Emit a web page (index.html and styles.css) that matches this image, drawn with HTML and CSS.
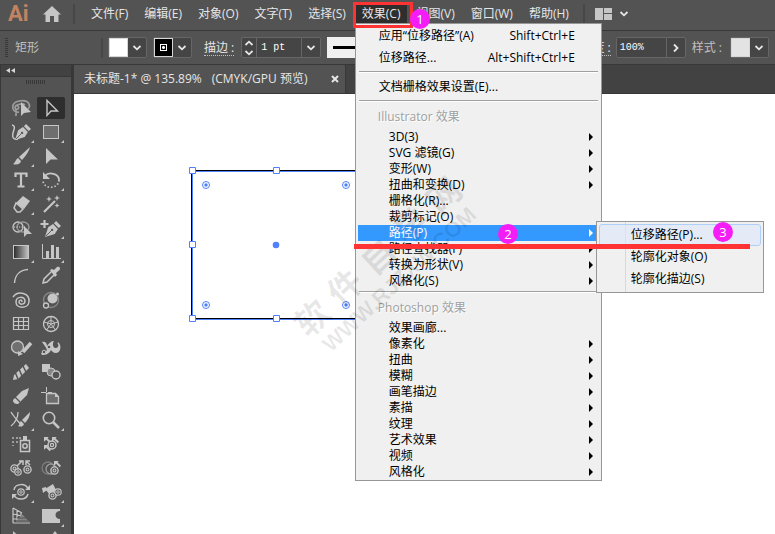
FILE: index.html
```html
<!DOCTYPE html>
<html lang="zh-CN">
<head>
    <meta charset="UTF-8">
    <meta name="viewport" content="width=device-width, initial-scale=1.0">
    <title>未标题-1</title>
    <link rel="stylesheet" href="styles.css">
</head>
<body>

<svg class="symbols" aria-hidden="true">
    <symbol id="chevron" viewBox="0 0 10 6"><path d="M1.5 1 5 4.3 8.5 1" fill="none" stroke="#e6e6e6" stroke-width="1.8"/></symbol>
    <symbol id="ring" viewBox="0 0 10 10"><circle cx="5" cy="5" r="4" fill="#535353" stroke="#c6c6c6" stroke-width="1.5"/><circle cx="5" cy="5" r="1.6" fill="none" stroke="#c6c6c6" stroke-width="1.2"/></symbol>
    <symbol id="nib" viewBox="0 0 18 18"><path d="M0 18 3.5 7 9 3.500l5.500 5.500L11 14.500Z" fill="#c6c6c6"/><path d="M10 2.600 12.500 0 18 5.500 15.400 8Z" fill="#c6c6c6"/><path d="m1 17 6.500-6.500" stroke="#535353"/><circle cx="8" cy="10" r="1.300" fill="#535353"/></symbol>
    <!-- arrow pointing to the upper left -->
    <symbol id="arrow" viewBox="0 0 8 8"><path d="M0 0h5.500L4 1.500 8 5.500 6.500 7 2.500 3 0 5.500Z" fill="#c6c6c6"/></symbol>
</svg>

<div class="app">

    <!-- Menu bar -->
    <div class="menubar">
        <span class="logo">Ai</span>
        <button class="home" aria-label="主页">
            <svg width="18" height="16" viewBox="0 0 18 16"><path d="M9 0 18 8.500H15.500V16H11V10H7V16H2.500V8.500H0Z" fill="#c6c6c6"/></svg>
        </button>
        <div class="divider"></div>
        <nav class="menus">
            <button>文件(F)</button>
            <button>编辑(E)</button>
            <button>对象(O)</button>
            <button>文字(T)</button>
            <button>选择(S)</button>
            <div class="menu-open">
                <button class="current">效果(C)</button>
                <div class="dropdown">
                    <ul class="large">
                        <li><button>应用“位移路径”(A)<kbd>Shift+Ctrl+E</kbd></button></li>
                        <li><button>位移路径...<kbd>Alt+Shift+Ctrl+E</kbd></button></li>
                    </ul>
                    <hr>
                    <ul class="large">
                        <li><button>文档栅格效果设置(E)...</button></li>
                    </ul>
                    <hr>
                    <h3>Illustrator 效果</h3>
                    <ul>
                        <li class="sub"><button>3D(3)</button></li>
                        <li class="sub"><button>SVG 滤镜(G)</button></li>
                        <li class="sub"><button>变形(W)</button></li>
                        <li class="sub"><button>扭曲和变换(D)</button></li>
                        <li><button>栅格化(R)...</button></li>
                        <li><button>裁剪标记(O)</button></li>
                        <li class="sub active"><button>路径(P)</button>
                            <div class="submenu">
                                <button class="hot">位移路径(P)...</button>
                                <button>轮廓化对象(O)</button>
                                <button>轮廓化描边(S)</button>
                            </div>
                        </li>
                        <li class="sub"><button>路径查找器(F)</button></li>
                        <li class="sub"><button>转换为形状(V)</button></li>
                        <li class="sub"><button>风格化(S)</button></li>
                    </ul>
                    <hr>
                    <h3>Photoshop 效果</h3>
                    <ul>
                        <li><button>效果画廊...</button></li>
                        <li class="sub"><button>像素化</button></li>
                        <li class="sub"><button>扭曲</button></li>
                        <li class="sub"><button>模糊</button></li>
                        <li class="sub"><button>画笔描边</button></li>
                        <li class="sub"><button>素描</button></li>
                        <li class="sub"><button>纹理</button></li>
                        <li class="sub"><button>艺术效果</button></li>
                        <li class="sub"><button>视频</button></li>
                        <li class="sub"><button>风格化</button></li>
                    </ul>
                </div>
            </div>
            <button>视图(V)</button>
            <button>窗口(W)</button>
            <button>帮助(H)</button>
        </nav>
        <div class="divider"></div>
        <button class="workspace" aria-label="工作区">
            <svg width="17" height="12" viewBox="0 0 17 12"><path d="M0 0h8v12H0zM9 0h8v5H9zM9 6h8v6H9z" fill="#c6c6c6"/></svg>
            <svg width="10" height="6"><use href="#chevron"/></svg>
        </button>
    </div>

    <!-- Control bar -->
    <div class="controlbar">
        <div class="grip"></div>
        <span class="kind">矩形</span>
        <div class="divider"></div>
        <div class="field fill">
            <span class="swatch white"></span>
            <button aria-label="填色"><svg width="10" height="6"><use href="#chevron"/></svg></button>
        </div>
        <div class="field">
            <span class="swatch black"><i></i></span>
            <button aria-label="描边颜色"><svg width="10" height="6"><use href="#chevron"/></svg></button>
        </div>
        <label class="dotted stroke-label" for="stroke">描边 :</label>
        <div class="field stroke">
            <button class="spin" aria-label="微调">
                <svg width="10" height="16" viewBox="0 0 10 16"><path d="M1.500 5 5 1.700 8.500 5M1.500 11 5 14.300 8.500 11" fill="none" stroke="#e6e6e6" stroke-width="1.800"/></svg>
            </button>
            <input id="stroke" type="text" value="1 pt">
            <button aria-label="粗细"><svg width="10" height="6"><use href="#chevron"/></svg></button>
        </div>
        <button class="profile" aria-label="画笔"><span></span></button>
        <label class="dotted" for="opacity">不透明度 :</label>
        <div class="field opacity">
            <input id="opacity" type="text" value="100%">
            <button aria-label="更多"><svg width="6" height="10" viewBox="0 0 6 10"><path d="M1 1.500 4.500 5 1 8.500" fill="none" stroke="#e6e6e6" stroke-width="1.800"/></svg></button>
        </div>
        <span class="style-label">样式 :</span>
        <div class="field">
            <span class="swatch grey"></span>
            <button aria-label="图形样式"><svg width="10" height="6"><use href="#chevron"/></svg></button>
        </div>
    </div>

    <div class="workarea">
        <!-- Tools -->
        <aside class="toolbox">
            <div class="collapse"><svg width="9" height="5" viewBox="0 0 9 5"><path d="M4 0v5L0 2.500ZM9 0v5L5 2.500Z" fill="#d6d6d6"/></svg></div>
            <div class="handle"></div>
            <div class="tools">
                <button aria-label="套索"><svg viewBox="0 0 28 22"><path d="M12 15C7 16 5 12 6 8c2-5 14-6 16-1 1 2 0 4-1 5M8 11c0-4 8-5 10-3M8 11c2 3 5 0 3-2s-4 1-2 4v6" fill="none" stroke="#9d9d9d" stroke-width="1.700"/><path d="M14 5v14l3-3 7-1Z" fill="#c6c6c6"/></svg></button>
                <button class="selected" aria-label="选择"><svg viewBox="0 0 28 22"><path d="M10 3.500v15l4-4.500h6.500Z" fill="none" stroke="#c6c6c6" stroke-width="1.400"/></svg></button>

                <button class="more" aria-label="曲率"><svg viewBox="0 0 28 22"><path d="M5 4c4 1 2 4 1 8s0 7 5 6" fill="none" stroke="#c6c6c6" stroke-width="1.500"/><use href="#nib" x="8" y="3" width="16" height="16"/></svg></button>
                <button class="more" aria-label="矩形"><svg viewBox="0 0 28 22"><rect x="6.500" y="4.500" width="15" height="13" fill="#6e6e6e" stroke="#c6c6c6"/></svg></button>

                <button class="more" aria-label="画笔"><svg viewBox="0 0 28 22"><path d="M23 2 12 12l3 3c4-4 7-9 8-13ZM11 13l3 3c-1 4-5 4-8 3 3-2 2-4 5-6Z" fill="#c6c6c6"/></svg></button>
                <button aria-label="直接选择"><svg viewBox="0 0 28 22"><path d="M9 3v16l4.500-4.500H21Z" fill="#c6c6c6"/></svg></button>

                <button class="more" aria-label="文字"><svg viewBox="0 0 28 22"><path d="M8.500 8V4.500h11V8M14 4.500v13M10.500 17.500h7" fill="none" stroke="#c6c6c6" stroke-width="2.200"/></svg></button>
                <button class="more" aria-label="旋转"><svg viewBox="0 0 28 22"><path d="M8 7c4-5 14-2 14 4" fill="none" stroke="#c6c6c6" stroke-width="1.800"/><path d="M6 3v7h7Z" fill="#c6c6c6"/><path d="M22 11c0 9-15 10-16 1" fill="none" stroke="#c6c6c6" stroke-width="1.700" stroke-dasharray="1.500 2"/></svg></button>

                <button class="more" aria-label="橡皮擦"><svg viewBox="0 0 28 22"><path d="m9 10 7-7 7 5-6 8Z" fill="#c6c6c6"/><path d="m9 10 7 6-3 3h-3l-3-4Z" fill="none" stroke="#c6c6c6" stroke-width="1.500"/></svg></button>
                <button aria-label="魔棒"><svg viewBox="0 0 28 22"><path d="M7 19 18 8" stroke="#c6c6c6" stroke-width="2.200"/><path d="m12 3 .8 2.200L15 6l-2.200.800L12 9l-.800-2.200L9 6l2.200-.800ZM20 2l.800 2.200L23 5l-2.200.800L20 8l-.800-2.200L17 5l2.200-.800ZM20 10l.700 1.800 1.800.700-1.800.700L20 15l-.700-1.800-1.800-.700 1.800-.700Z" fill="#c6c6c6"/></svg></button>

                <button aria-label="形状生成器"><svg viewBox="0 0 28 22"><circle cx="11" cy="10" r="5" fill="none" stroke="#c6c6c6" stroke-width="1.300"/><ellipse cx="16" cy="10" rx="6" ry="5" fill="none" stroke="#9d9d9d" stroke-width="1.300"/><path d="M7 10h12" stroke="#e0e0e0" stroke-dasharray="1 1.500"/><path d="M17 9v11l3-3h5Z" fill="#c6c6c6"/></svg></button>
                <button class="more" aria-label="添加锚点"><svg viewBox="0 0 28 22"><path d="M3.500 7h8M7.500 3v8" stroke="#c6c6c6" stroke-width="2.200"/><use href="#nib" x="8" y="4" width="16" height="16"/></svg></button>

                <button class="more" aria-label="渐变"><svg viewBox="0 0 28 22"><defs><linearGradient id="grad"><stop stop-color="#2a2a2a"/><stop offset="1" stop-color="#c6c6c6"/></linearGradient></defs><rect x="6.500" y="4.500" width="15" height="13" fill="url(#grad)" stroke="#c6c6c6"/></svg></button>
                <button class="more" aria-label="图表"><svg viewBox="0 0 28 22"><path d="M5.500 3v14.500H24" fill="none" stroke="#c6c6c6"/><path d="M9 10h3v7H9zM14 4h3v13h-3zM19 6h3v11h-3z" fill="#c6c6c6"/></svg></button>

                <button aria-label="弧形"><svg viewBox="0 0 28 22"><path d="M7.500 18C8 10 13 5 21 4.500" fill="none" stroke="#c6c6c6" stroke-width="1.400"/></svg></button>
                <button aria-label="吸管"><svg viewBox="0 0 28 22"><path d="m6 18 1-4 8-8 3 3-8 8Z" fill="none" stroke="#c6c6c6" stroke-width="1.500"/><path d="m13 5 2-1 2 1 3-3c2-1 4 1 2.500 3L19 8l1 2-2 2Z" fill="#c6c6c6"/></svg></button>

                <button aria-label="螺旋线"><svg viewBox="0 0 28 22"><path d="M6 8c5-7 17-4 16 5-1 7-13 7-13 0 0-6 9-6 9-1 0 4-6 4-6 1 0-2 3-3 3 0" fill="none" stroke="#c6c6c6" stroke-width="1.500"/></svg></button>
                <button aria-label="旋转扭曲"><svg viewBox="0 0 28 22"><circle cx="14" cy="11" r="7.500" fill="none" stroke="#858585" stroke-width="1.400"/><circle cx="15.500" cy="9.500" r="5" fill="#c6c6c6"/><circle cx="20.500" cy="5" r="1.500" fill="#c6c6c6"/><circle cx="9" cy="16.500" r="2.500" fill="#535353" stroke="#c6c6c6" stroke-width="1.300"/></svg></button>

                <button aria-label="矩形网格"><svg viewBox="0 0 28 22"><path d="M6.500 4.500h15v12h-15zM6.500 8.500h15M6.500 12.500h15M11.500 4.500v12M16.500 4.500v12" fill="none" stroke="#c6c6c6" stroke-width="1.200"/></svg></button>
                <button aria-label="极坐标网格"><svg viewBox="0 0 28 22"><circle cx="14" cy="11" r="7.500" fill="none" stroke="#c6c6c6" stroke-width="1.300"/><circle cx="14" cy="11" r="3.500" fill="none" stroke="#c6c6c6"/><path d="M14 3.500V11M7 9l7 2 7-2M9.500 17l4.500-6 4.500 6" fill="none" stroke="#c6c6c6"/></svg></button>

                <button aria-label="斑点画笔"><svg viewBox="0 0 28 22"><circle cx="10.500" cy="10" r="6" fill="#707070" stroke="#c6c6c6" stroke-width="1.300"/><path d="m24 6-8 9" stroke="#c6c6c6" stroke-width="3.500"/><path d="m11 14 5 3-5 2Z" fill="#c6c6c6"/></svg></button>
                <button aria-label="操控变形"><svg viewBox="0 0 28 22"><path d="M5 5c3-1 5 1 5 4 2-3 4-5 7-5-2 3-1 6 1 7 3 0 4-2 3-4-1-1 0-2 1-1 3 4 1 10-3 10-3 0-4-2-5-3-2 4-5 5-9 5l-1-2c2 0 5-1 6-3-1-3-3-5-5-8Z" fill="#c6c6c6"/><circle cx="7" cy="15" r="1.800" fill="#535353" stroke="#c6c6c6"/><circle cx="12" cy="10" r="1.300" fill="#535353"/></svg></button>

                <button aria-label="铅笔"><svg viewBox="0 0 28 22"><path d="m6 19 1-5L19 3l3 4-11 11Z" fill="#c6c6c6"/><path d="m8 11 3 7M12 8l3 7M16 5l3 6" stroke="#535353" stroke-width="1.500"/></svg></button>
                <button aria-label="混合"><svg viewBox="0 0 28 22"><path d="M5 3h8v8H5z" fill="#c6c6c6"/><circle cx="14" cy="11" r="4" fill="#858585" stroke="#c6c6c6"/><circle cx="19" cy="14" r="4" fill="#535353" stroke="#c6c6c6" stroke-width="1.400"/></svg></button>

                <button aria-label="蜡笔"><svg viewBox="0 0 28 22"><path d="m6 15 9-9 7-3-2 7-9 9c-3 0-5-1-5-4Z" fill="#c6c6c6"/><path d="m8 12 5 5" stroke="#535353" stroke-width="1.200"/></svg></button>
                <button aria-label="画板"><svg viewBox="0 0 28 22"><path d="M9.500 8.500h9l3 3v7h-12Z" fill="#6e6e6e" stroke="#c6c6c6" stroke-width="1.300"/><path d="M4 7.500h5M9.500 2v5M11 7.500h4" stroke="#c6c6c6"/><path d="M18 8v4h4Z" fill="#c6c6c6"/></svg></button>

                <button class="more" aria-label="实时上色"><svg viewBox="0 0 28 22"><path d="M4 3c3 5 7 9 11 14M11 3c0 6-2 10-7 14" fill="none" stroke="#c6c6c6" stroke-width="1.300"/><path d="m23 3-8 8 3 3c3-3 5-7 5-11ZM14 12l3 3c-1 3-4 3-6 2 2-1 1-4 3-5Z" fill="#c6c6c6"/></svg></button>
                <button class="more" aria-label="缩放"><svg viewBox="0 0 28 22"><circle cx="12" cy="9" r="5.700" fill="none" stroke="#c6c6c6" stroke-width="1.600"/><path d="m16 13 6 6" stroke="#c6c6c6" stroke-width="2.500"/></svg></button>

                <button aria-label="符号喷枪"><svg viewBox="0 0 28 22"><path d="M5 4h2v2H5zM9 4h2v2H9zM12 4h2v2h-2zM5 8h2v2H5zM9 8h2v2H9zM5 12h2v1H5z" fill="#9d9d9d"/><path d="M16 3h4v4h-4z" fill="#c6c6c6"/><rect x="13.500" y="7.500" width="9" height="11" fill="none" stroke="#c6c6c6" stroke-width="1.500"/><circle cx="18" cy="13" r="2.200" fill="none" stroke="#c6c6c6" stroke-width="1.500"/></svg></button>
                <button aria-label="符号移位"><svg viewBox="0 0 28 22"><use href="#arrow" x="7" y="4" width="7" height="7"/><use href="#arrow" x="15" y="4" width="7" height="7"/><use href="#arrow" x="7" y="12" width="7" height="7"/><use href="#ring" x="10" y="7" width="10" height="10"/></svg></button>

                <button aria-label="符号紧缩"><svg viewBox="0 0 28 22"><path d="M12 4h4v4M10 9l5-5M23 8l-4-4M19 8V4h4" fill="none" stroke="#c6c6c6" stroke-width="1.500"/><use href="#ring" x="3" y="7" width="9" height="9"/><use href="#ring" x="7" y="11" width="8" height="8"/><use href="#ring" x="16" y="8" width="9" height="9"/></svg></button>
                <button aria-label="符号缩放"><svg viewBox="0 0 28 22"><circle cx="11" cy="11" r="6" fill="none" stroke="#7c7c7c" stroke-width="1.300"/><circle cx="14" cy="12" r="5" fill="none" stroke="#9a9a9a" stroke-width="1.300"/><use href="#arrow" x="17" y="4" width="7" height="7"/><use href="#ring" x="13" y="9" width="9" height="9"/></svg></button>

                <button class="more" aria-label="符号旋转"><svg viewBox="0 0 28 22"><path d="M7 9c1-7 12-7 14-1M21 13c-2 7-12 6-14 1" fill="none" stroke="#c6c6c6" stroke-width="1.500"/><use href="#ring" x="10" y="7" width="8" height="8"/><path d="M18 9h5V4ZM10 13H5v5Z" fill="#c6c6c6"/></svg></button>
                <button class="more" aria-label="符号着色"><svg viewBox="0 0 28 22"><path d="m8 8 8-5 3 6-6 5Z" fill="#c6c6c6"/><path d="m9 6-4 1 1 5 4-3" fill="#c6c6c6"/><use href="#ring" x="11" y="10" width="9" height="9"/><use href="#ring" x="17" y="7" width="8" height="8"/></svg></button>

                <button aria-label="透视网格"><svg viewBox="0 0 28 22"><path d="M6 3v15M10 5v12M14 7v8M6 3l9 5M6 9l9 2M6 14l9 0M6 18h17" fill="none" stroke="#c6c6c6" stroke-width="1.200"/><path d="M14 10h2l7 8H8Z" fill="#858585"/><path d="M10 13h9M9 16h12" stroke="#535353"/></svg></button>
                <button class="more" aria-label="变形"><svg viewBox="0 0 28 22"><path d="M5 4h18v2c-6 0-6 8 0 8v4H5Z" fill="#c6c6c6"/></svg></button>

                <button aria-label="钢笔"><svg viewBox="0 0 28 22"><path d="M6 2v14l9-6Z" fill="#c6c6c6"/></svg></button>
                <button aria-label="抓手"><svg viewBox="0 0 28 22"><path d="m18 2 3 4h-6Z" fill="#c6c6c6"/></svg></button>
            </div>
        </aside>

        <!-- Document -->
        <main class="document">
            <div class="tabs">
                <div class="tab">
                    <span>未标题-1* @ 135.89%</span>
                    <span>(CMYK/GPU 预览)</span>
                    <button aria-label="关闭"><svg width="8" height="8" viewBox="0 0 8 8"><path d="m1 1 6 6M7 1 1 7" stroke="#e6e6e6" stroke-width="2"/></svg></button>
                </div>
            </div>
            <div class="canvas">
                <svg class="shape" width="178" height="158" viewBox="0 0 178 158">
                    <rect x="4" y="5" width="169" height="148" fill="#fff" stroke="#000" stroke-width="2"/>
                    <rect x="4.500" y="5.500" width="168" height="148" fill="none" stroke="#4f80ff"/>
                    <g fill="#fff" stroke="#4f80ff">
                        <path d="M1.500 1.500h6v6h-6zM85.500 1.500h6v6h-6zM169.500 1.500h6v6h-6zM1.500 75.500h6v6h-6zM169.500 75.500h6v6h-6zM1.500 149.500h6v6h-6zM85.500 149.500h6v6h-6zM169.500 149.500h6v6h-6z"/>
                        <circle cx="18" cy="19" r="3.500"/><circle cx="158" cy="19" r="3.500"/>
                        <circle cx="18" cy="139" r="3.500"/><circle cx="158" cy="139" r="3.500"/>
                    </g>
                    <g fill="#4f80ff">
                        <circle cx="18" cy="19" r="1.700"/><circle cx="158" cy="19" r="1.700"/>
                        <circle cx="18" cy="139" r="1.700"/><circle cx="158" cy="139" r="1.700"/>
                        <circle cx="88" cy="79" r="3.300"/>
                    </g>
                </svg>
            </div>
        </main>
    </div>

    <!-- Watermark and step marks -->
    <div class="watermark">
        <div class="name"><span>软</span><span>件</span><span>自</span><span>学</span><span>网</span></div>
        <div class="site">WWW.RJZXW.COM</div>
    </div>
    <div class="mark-box"></div>
    <div class="mark-line"></div>
    <span class="step one">1</span>
    <span class="step two">2</span>
    <span class="step three">3</span>
</div>

</body>
</html>
```

FILE: styles.css
```css
* {
    margin: 0;
    padding: 0;
    box-sizing: border-box;
}

body {
    font-family: "Open Sans", "Noto Sans CJK SC", sans-serif;
    font-size: 12px;
    line-height: 16px;
    background: #fff;
    color: #e6e6e6;
    overflow: hidden;
}

button {
    font: inherit;
    color: inherit;
    background: none;
    border: none;
}

svg {
    display: block;
    flex: none;
}

.symbols {
    position: absolute;
    width: 0;
    height: 0;
}

.app {
    position: relative;
    display: flex;
    flex-direction: column;
    height: 100vh;
    overflow: hidden;
}

/* Menu bar */
.menubar {
    display: flex;
    align-items: center;
    height: 31px;
    padding: 0 8px 3px;
    background: #535353;
    border-bottom: 1px solid #383838;
    flex: none;
}

.logo {
    width: 35px;
    font-family: "Liberation Sans Narrow", Roboto, sans-serif;
    font-size: 22px;
    font-weight: bold;
    line-height: 24px;
    color: #c08462;
}

.divider {
    width: 2px;
    height: 20px;
    background: #474747;
    flex: none;
}

.home {
    margin-right: 12px;
}

.menus {
    display: flex;
    gap: 2px;
    margin: 0 7px 0 9px;
    white-space: nowrap;
}

.menus > button,
.menus .current {
    height: 18px;
    line-height: 18px;
    padding: 0 7px;
}

.menus .current {
    background: #2e2e2e;
}

.menu-open {
    position: relative;
}

.workspace {
    display: flex;
    align-items: center;
    gap: 7px;
    margin-left: 10px;
}

/* Drop-down */
.dropdown {
    position: absolute;
    top: 18px;
    left: 0;
    z-index: 10;
    width: 247px;
    padding: 1px 0 0;
    background: #f0f0f0;
    border: 1px solid #979797;
    color: #000;
}

.dropdown ul {
    list-style: none;
}

.dropdown li {
    position: relative;
    height: 16px;
    padding: 0 2px;
}

.dropdown li > button {
    display: flex;
    align-items: center;
    width: 100%;
    height: 16px;
    padding-left: 31px;
    text-align: left;
    line-height: 16px;
}

.dropdown .large li,
.dropdown .large li > button {
    height: 22px;
}

.dropdown .large li > button {
    justify-content: space-between;
    padding: 0 24px 0 21px;
}

.dropdown kbd {
    font: inherit;
}

.dropdown h3 {
    height: 24px;
    padding-left: 22px;
    font-size: 12px;
    font-weight: normal;
    line-height: 24px;
    color: #a0a0a0;
    text-shadow: 1px 1px #fff;
}

.dropdown hr {
    height: 2px;
    margin: 2px 3px 3px;
    border: none;
    border-top: 1px solid #a0a0a0;
    background: #fff;
}

.dropdown .sub::after {
    content: "";
    position: absolute;
    top: 4px;
    right: 8px;
    border: 4px solid transparent;
    border-left-color: #000;
    border-right: none;
}

.dropdown .active > button {
    background: #3399ff;
    color: #fff;
}

.dropdown .active::after {
    border-left-color: #fff;
}

.submenu {
    position: absolute;
    top: -4px;
    left: 240px;
    z-index: 1;
    width: 168px;
    padding: 2px;
    background: linear-gradient(to right, transparent 28px, #d8d8d8 28px, #d8d8d8 29px, transparent 29px) #f0f0f0;
    border: 1px solid #979797;
}

.submenu button {
    display: block;
    width: 100%;
    height: 22px;
    padding-left: 31px;
    border: 1px solid transparent;
    text-align: left;
    line-height: 20px;
}

.submenu .hot {
    background: rgba(220, 232, 250, 0.6);
    border-color: #aecff7;
    border-radius: 3px;
}

/* Control bar */
.controlbar {
    display: flex;
    align-items: center;
    height: 34px;
    padding-left: 5px;
    background: #535353;
    border-bottom: 1px solid #383838;
    flex: none;
    white-space: nowrap;
}

.grip {
    width: 3px;
    height: 19px;
    margin-right: 7px;
    background: repeating-linear-gradient(#383838 0 1px, transparent 1px 2px);
}

.kind {
    flex: none;
    width: 86px;
    color: #c0c0c0;
}

.field {
    display: flex;
    flex: none;
    height: 21px;
    margin-right: 6px;
    background: #454545;
    border: 1px solid #666;
    border-radius: 2px;
}

.fill {
    margin-left: 5px;
}

.field button {
    display: flex;
    align-items: center;
    justify-content: center;
    width: 18px;
}

.swatch {
    width: 19px;
    height: 19px;
    border: 1px solid #d6d6d6;
}

.white {
    background: #fff;
}

.black {
    padding: 5px;
    background: #000;
}

.black i {
    display: block;
    width: 7px;
    height: 7px;
    border: 1px solid #fff;
    background: radial-gradient(#fff 1px, #000 2px);
}

.grey {
    background: #e3e3e3;
}

.field input {
    width: 46px;
    padding-left: 4px;
    border: 1px solid #666;
    border-width: 0 1px;
    background: #454545;
    color: #fff;
    font-family: "Liberation Mono", monospace;
    font-size: 10px;
}

.field .spin {
    width: 14px;
}

.opacity input {
    width: 50px;
    padding-left: 3px;
    border-left: none;
}

.dotted {
    border-bottom: 1px dotted #c0c0c0;
    line-height: 15px;
}

.stroke-label {
    margin: 0 7px 0 6px;
}

.profile {
    display: flex;
    align-items: center;
    flex: 1;
    height: 21px;
    margin-right: 25px;
    padding-left: 6px;
    background: #f0f0f0;
}

.profile span {
    width: 100%;
    height: 3px;
    background: #000;
}

.dotted + .opacity {
    margin-left: 5px;
}

.style-label {
    margin-right: 8px;
    color: #c0c0c0;
}

/* Work area */
.workarea {
    display: flex;
    flex: 1;
    min-height: 0;
}

.toolbox {
    flex: none;
    width: 74px;
    background: #535353;
    border: solid #383838;
    border-width: 0 3px 0 1px;
}

.collapse {
    height: 12px;
    padding: 3px 5px;
    background: #424242;
    border-bottom: 1px solid #383838;
}

.handle {
    width: 19px;
    height: 4px;
    margin: 3px 0 13px 25px;
    background: repeating-linear-gradient(to right, #383838 0 1px, transparent 1px 2px);
}

.tools {
    display: grid;
    grid-template-columns: 28px 28px;
    gap: 2px;
    padding-left: 6px;
}

.tools button {
    position: relative;
    height: 22px;
    border-radius: 2px;
}

.tools .selected {
    background: #2e2e2e;
}

.tools .more::after {
    content: "";
    position: absolute;
    right: 1px;
    bottom: 0;
    border: 3px solid #c6c6c6;
    border-width: 0 0 3px 3px;
    border-left-color: transparent;
}

.document {
    display: flex;
    flex-direction: column;
    flex: 1;
    min-width: 0;
}

.tabs {
    display: flex;
    height: 29px;
    background: #424242;
    border-bottom: 1px solid #383838;
}

.tab {
    display: flex;
    align-items: center;
    gap: 10px;
    padding: 0 6px 0 10px;
    background: #535353;
    border-right: 1px solid #383838;
}

.tab button {
    margin-left: 14px;
}

.canvas {
    position: relative;
    flex: 1;
    background: #fff;
}

.shape {
    position: absolute;
    top: 72px;
    left: 114px;
}

/* Overlays */
.watermark {
    position: absolute;
    top: 233px;
    left: 276px;
    z-index: 20;
    display: flex;
    flex-direction: column;
    align-items: center;
    width: 220px;
    color: rgba(0, 0, 0, 0.09);
    font-weight: bold;
    transform: rotate(-43deg);
    pointer-events: none;
}

.name {
    display: flex;
    gap: 11px;
    font-size: 34px;
    line-height: 40px;
}

.site {
    font-family: "Liberation Sans", sans-serif;
    font-size: 22px;
    line-height: 24px;
}

.mark-box {
    position: absolute;
    top: 2px;
    left: 353px;
    z-index: 30;
    width: 60px;
    height: 26px;
    border: 3px solid #ff3333;
}

.mark-line {
    position: absolute;
    top: 244px;
    left: 354px;
    z-index: 30;
    width: 396px;
    height: 5px;
    background: #ff3333;
}

.step {
    position: absolute;
    z-index: 31;
    width: 20px;
    height: 20px;
    border-radius: 50%;
    background: #f51df5;
    color: #fff;
    font-size: 13px;
    text-align: center;
    line-height: 20px;
}

.one {
    top: 9px;
    left: 410px;
}

.two {
    top: 224px;
    left: 498px;
}

.three {
    top: 222px;
    left: 713px;
}
```
